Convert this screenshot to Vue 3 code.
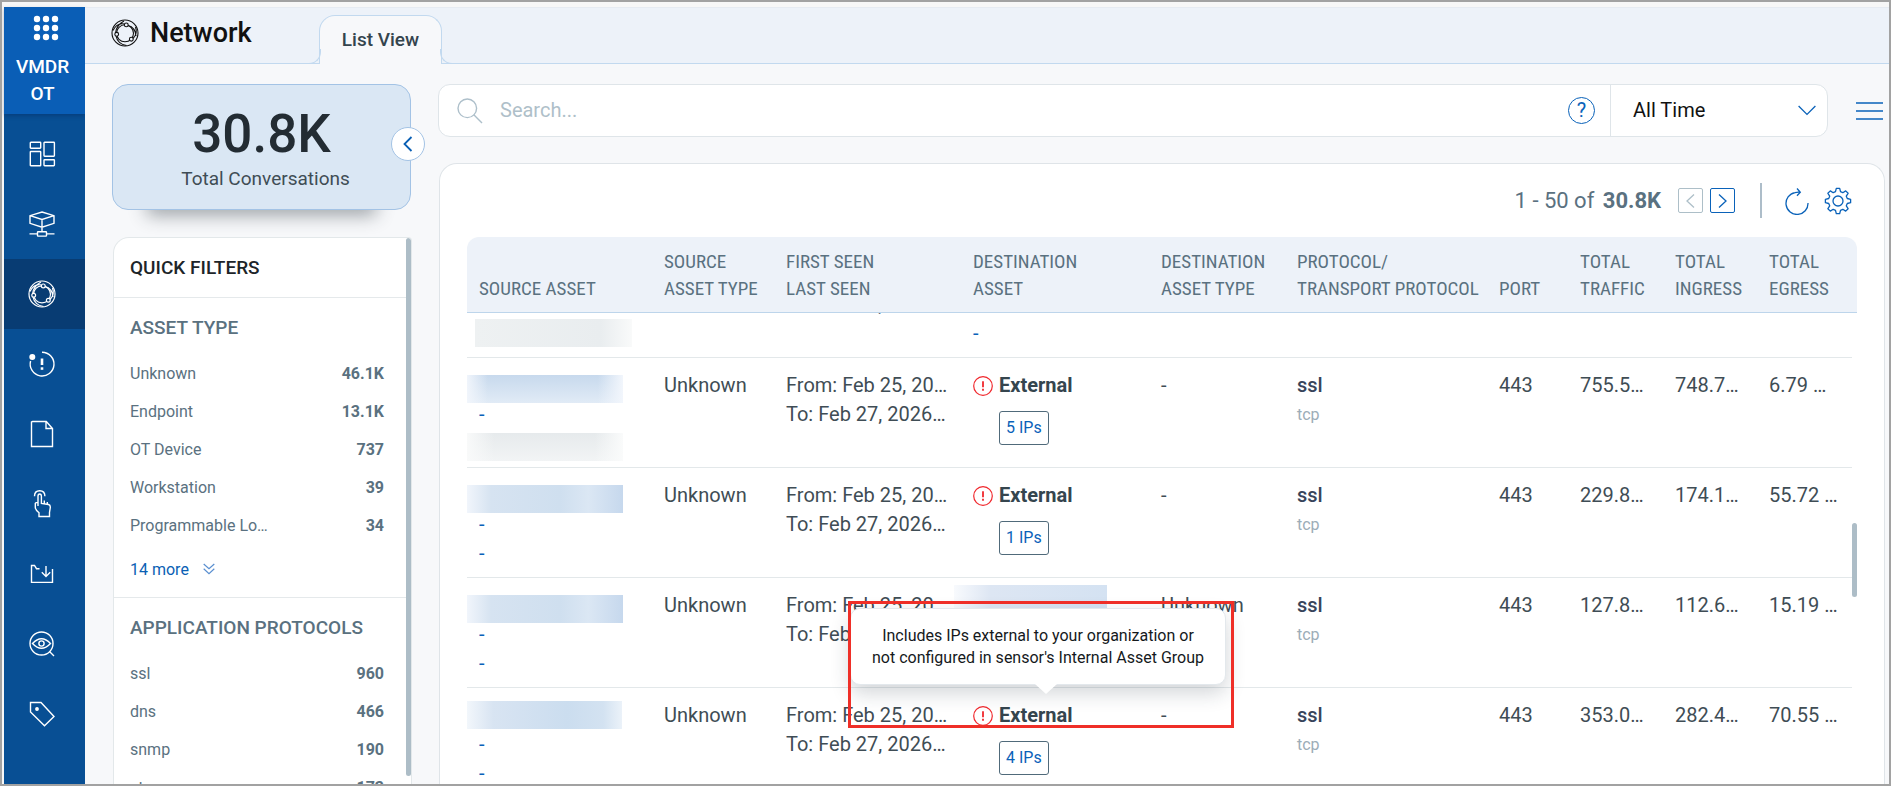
<script setup>
import { ref, onMounted } from 'vue'

const assetTypes = [
  { name: 'Unknown', count: '46.1K' },
  { name: 'Endpoint', count: '13.1K' },
  { name: 'OT Device', count: '737' },
  { name: 'Workstation', count: '39' },
  { name: 'Programmable Lo…', count: '34' },
]
const protocols = [
  { name: 'ssl', count: '960' },
  { name: 'dns', count: '466' },
  { name: 'snmp', count: '190' },
  { name: 'stun', count: '173' },
]
const columns = [
  { key: 'source', lines: ['SOURCE ASSET'] },
  { key: 'stype', lines: ['SOURCE', 'ASSET TYPE'] },
  { key: 'seen', lines: ['FIRST SEEN', 'LAST SEEN'] },
  { key: 'dest', lines: ['DESTINATION', 'ASSET'] },
  { key: 'dtype', lines: ['DESTINATION', 'ASSET TYPE'] },
  { key: 'proto', lines: ['PROTOCOL/', 'TRANSPORT PROTOCOL'] },
  { key: 'port', lines: ['PORT'] },
  { key: 'traffic', lines: ['TOTAL', 'TRAFFIC'] },
  { key: 'ingress', lines: ['TOTAL', 'INGRESS'] },
  { key: 'egress', lines: ['TOTAL', 'EGRESS'] },
]
const rows = [
  { source: ['blue', '-', 'grey'], dtype: '-', ips: '5 IPs', traffic: '755.5…', ingress: '748.7…', egress: '6.79 …' },
  { source: ['fade', '-', '-'], dtype: '-', ips: '1 IPs', traffic: '229.8…', ingress: '174.1…', egress: '55.72 …' },
  { source: ['fade', '-', '-'], dtype: 'Unknown', ips: '', traffic: '127.8…', ingress: '112.6…', egress: '15.19 …' },
  { source: ['soft', '-', '-'], dtype: '-', ips: '4 IPs', traffic: '353.0…', ingress: '282.4…', egress: '70.55 …', tip: true },
]
const nav = ['dashboard', 'assets', 'network', 'alerts', 'reports', 'policy', 'inbox', 'inspect', 'tags']

const period = ref('All Time')
const query = ref('')
const scroller = ref(null)
onMounted(() => {
  scroller.value.scrollTop = 65
})
</script>

<template>
  <div class="frame">
    <nav class="side" aria-label="Main">
      <button class="app" type="button">
        <svg width="26" height="26" viewBox="0 0 26 26" fill="#fff" aria-hidden="true">
          <template v-for="y in 3" :key="y">
            <circle v-for="x in 3" :key="x" :cx="x * 9 - 5" :cy="y * 9 - 5" r="3.2" />
          </template>
        </svg>
        <span>VMDR<br>OT</span>
      </button>
      <div class="items">
        <a v-for="n in nav" :key="n" href="#" :aria-label="n" :class="{ active: n === 'network' }">
          <svg width="28" height="28" viewBox="0 0 28 28" fill="none" stroke="#fff" stroke-width="1.4" aria-hidden="true">
            <template v-if="n === 'dashboard'">
              <rect x="2.3" y="2.2" width="10.4" height="6" rx=".6" /><rect x="2.3" y="11.5" width="10.4" height="14.3" rx=".6" />
              <rect x="16" y="2.2" width="10.4" height="14" rx=".6" /><rect x="16" y="19.7" width="10.4" height="6" rx=".6" />
            </template>
            <template v-else-if="n === 'assets'">
              <path d="M14 2 26 5.7V13.300L14 17.200 2 13.300V5.700Z M2 5.700 14 9.500 26 5.700 M14 9.500V21.500" />
              <rect x="9.500" y="21.700" width="9" height="4.400" rx=".6" /><path d="M1.500 23.900H9.500M18.500 23.900H26.500" />
            </template>
            <g v-else-if="n === 'network'" stroke-width="1.2">
              <circle cx="14" cy="14" r="13" /><circle cx="14" cy="14.300" r="8.500" />
              <path d="M13.500 5C9 4 4.500 6.500 2 11.500M17 6.500C21.500 7.500 24.500 11 25 17M5 17C6 22 10 25.500 15.500 26.500M22 19.500C25 16.500 26 12 24.500 8M4.500 14C5 9 8.500 4.500 13 2" />
              <g fill="#083c73"><circle cx="15.300" cy="5.900" r="1.900" /><circle cx="5.700" cy="15.300" r="1.900" /><circle cx="20.300" cy="20.200" r="1.900" /></g>
            </g>
            <template v-else-if="n === 'alerts'">
              <path d="M14 2.200A11.900 11.900 0 1 1 2.600 11" /><circle cx="4.300" cy="7" r="2.300" fill="#fff" />
              <path d="M14 8.500V15" stroke-width="2.600" /><path d="M14 17.300V19.800" stroke-width="2.600" />
            </template>
            <path v-else-if="n === 'reports'" d="M3.500 1.500V26.500H24.500V8.500L18.300 1.500H4.500Q3.500 1.500 3.500 2.500M18 1.700V8.500H24.400" />
            <template v-else-if="n === 'policy'">
              <path d="M10 16V6.300Q10 4 11.700 4T13.400 6.300V13.500L20.500 14.500Q22.500 15 22.300 17.500L21.500 22.500V26.500H11V22.700Q7.500 20 7.300 17.500V13.300Q8 12.200 10 12.400M13.400 14V9.500M16.300 14.500V10.500M19.300 15V12" />
              <path d="M6.500 6.300Q6.500 .8 11.700 .8T16.900 6.300" />
            </template>
            <path v-else-if="n === 'inbox'" d="M11.500 8.700H8.500L6.500 5.500H3.500V22.400H24.500V9M18 6V16M13.800 12.300 18 16.500 22.200 12.300" />
            <template v-else-if="n === 'inspect'">
              <circle cx="13.500" cy="13.500" r="11.500" /><path d="M21.500 21.500 26 26M4.500 13.500Q13.500 4 22.500 13.500Q13.500 23 4.500 13.500Z" />
              <circle cx="13.500" cy="13.500" r="2.600" />
            </template>
            <template v-else>
              <path d="M2.500 2.500H13L26 16.500 16.500 25.800 2.500 12Z" /><circle cx="9" cy="9" r="1.200" fill="#fff" />
            </template>
          </svg>
        </a>
      </div>
    </nav>

    <div class="page">
      <header class="top">
        <h1>
          <svg width="28" height="28" viewBox="0 0 28 28" fill="none" stroke="#111" stroke-width="1.100" aria-hidden="true">
            <circle cx="14" cy="14" r="13" /><circle cx="14" cy="14.300" r="8.500" />
            <path d="M13.500 5C9 4 4.500 6.500 2 11.500M17 6.500C21.500 7.500 24.500 11 25 17M5 17C6 22 10 25.500 15.500 26.500M22 19.500C25 16.500 26 12 24.500 8M4.500 14C5 9 8.500 4.500 13 2" />
            <g fill="#edf2f9"><circle cx="15.300" cy="5.900" r="1.900" /><circle cx="5.700" cy="15.300" r="1.900" /><circle cx="20.300" cy="20.200" r="1.900" /></g>
          </svg>
          Network
        </h1>
        <a class="tab" href="#">List View</a>
      </header>

      <div class="body">
        <aside>
          <section class="total">
            <strong>30.8K</strong>
            <span>Total Conversations</span>
            <button class="fold" type="button" aria-label="Collapse filters">
              <svg width="10" height="16" viewBox="0 0 10 16" fill="none" stroke="#0a5fb4" stroke-width="1.800"><path d="M8.500 1 1.500 8l7 7" /></svg>
            </button>
          </section>
          <section class="filters">
            <h2>QUICK FILTERS</h2>
            <div class="group">
              <h3>ASSET TYPE</h3>
              <ul>
                <li v-for="f in assetTypes" :key="f.name"><a href="#">{{ f.name }}</a><b>{{ f.count }}</b></li>
              </ul>
              <button class="more" type="button">
                14 more
                <svg width="12" height="12" viewBox="0 0 12 12" fill="none" stroke="#5a8fd0" stroke-width="1.200"><path d="M.7 1 6 5.800 11.300 1M.7 5.800 6 10.600 11.300 5.800" /></svg>
              </button>
            </div>
            <div class="group">
              <h3>APPLICATION PROTOCOLS</h3>
              <ul>
                <li v-for="f in protocols" :key="f.name"><a href="#">{{ f.name }}</a><b>{{ f.count }}</b></li>
              </ul>
            </div>
            <i class="thumb"></i>
          </section>
        </aside>

        <main>
          <div class="bar">
            <div class="search">
              <label for="q" aria-label="Search">
                <svg width="26" height="26" viewBox="0 0 26 26" fill="none" stroke="#adbfca" stroke-width="1.400"><circle cx="10.300" cy="10.300" r="9.300" /><path d="M16.800 16.800 25 25" /></svg>
              </label>
              <input id="q" v-model="query" type="text" placeholder="Search...">
              <button class="help" type="button" aria-label="Help">?</button>
              <div class="period">
                <select v-model="period" aria-label="Time range"><option>All Time</option></select>
                <svg width="18" height="11" viewBox="0 0 18 11" fill="none" stroke="#0a62b9" stroke-width="1.300"><path d="M.6 1 9 9.400 17.400 1" /></svg>
              </div>
            </div>
            <button class="menu" type="button" aria-label="Menu">
              <svg width="27" height="18" viewBox="0 0 27 18" stroke="#0a62b9" stroke-width="1.400"><path d="M0 1H27M0 9H27M0 17H27" /></svg>
            </button>
          </div>

          <section class="card">
            <div class="tools">
              <span class="range">1 - 50 of <b>30.8K</b></span>
              <button class="pg off" type="button" aria-label="Previous page">
                <svg width="9" height="14" viewBox="0 0 9 14" fill="none" stroke="currentColor" stroke-width="1.300"><path d="M8 .6 1 7l7 6.400" /></svg>
              </button>
              <button class="pg" type="button" aria-label="Next page">
                <svg width="9" height="14" viewBox="0 0 9 14" fill="none" stroke="currentColor" stroke-width="1.300"><path d="M1 .6 8 7l-7 6.400" /></svg>
              </button>
              <i class="sep"></i>
              <button class="ico" type="button" aria-label="Refresh">
                <svg width="28" height="28" viewBox="0 0 28 28" fill="none" stroke="#0a62b9" stroke-width="1.300"><path d="M17 5.200Q15 4.800 12 5.600A11 11 0 1 0 25 16M14 1.500 17.300 5.200 14 8.700" /></svg>
              </button>
              <button class="ico" type="button" aria-label="Settings">
                <svg width="28" height="28" viewBox="0 0 28 28" fill="none" stroke="#0a62b9" stroke-width="1.300" stroke-linejoin="round"><circle cx="14" cy="14" r="5" /><path d="M12.300 1h3.400l.8 3.300 2.300 1 2.900-1.800 2.400 2.400-1.800 2.900 1 2.300 3.300.8v3.400l-3.300.8-1 2.300 1.800 2.900-2.400 2.400-2.900-1.800-2.300 1-.8 3.300h-3.400l-.8-3.300-2.300-1-2.900 1.800-2.400-2.400 1.800-2.900-1-2.300L1.400 15.300v-3.400l3.300-.8 1-2.300-1.800-2.900 2.400-2.400 2.900 1.800 2.300-1Z" transform="translate(0 .4)" /></svg>
              </button>
            </div>

            <div class="grid">
              <div ref="scroller" class="scroll">
                <table>
                  <thead>
                    <tr>
                      <th v-for="c in columns" :key="c.key" :class="c.key" scope="col"><span v-for="l in c.lines" :key="l">{{ l }}</span></th>
                    </tr>
                  </thead>
                  <tbody>
                    <tr>
                      <td><span class="ln"></span><span class="ln"></span><i class="blob grey inset"></i></td>
                      <td></td>
                      <td><span class="ln"></span><span class="ln">To: Feb 27, 2026…</span></td>
                      <td><span class="ln"></span><span class="ln"></span><a class="dash" href="#">-</a></td>
                      <td></td><td></td><td></td><td></td><td></td><td></td>
                    </tr>
                    <tr v-for="(r, i) in rows" :key="i">
                      <td>
                        <template v-for="(s, k) in r.source" :key="k">
                          <a v-if="s === '-'" class="dash" href="#">-</a>
                          <i v-else class="blob" :class="s"></i>
                        </template>
                      </td>
                      <td>Unknown</td>
                      <td><span class="ln">From: Feb 25, 20…</span><span class="ln">To: Feb 27, 2026…</span></td>
                      <td :class="{ anchor: r.tip }">
                        <template v-if="r.ips">
                          <span class="ext">
                            <svg width="20" height="20" viewBox="0 0 20 20" fill="none" stroke="#f0282d" stroke-width="1.200" aria-hidden="true"><circle cx="10" cy="10" r="9.300" /><path d="M10 5.200V11.200M10 12.800V14.800" stroke-width="1.800" /></svg>
                            <b>External</b>
                          </span>
                          <button class="ips" type="button">{{ r.ips }}</button>
                        </template>
                        <i v-else class="blob dest-blob"></i>
                        <template v-if="r.tip">
                          <span class="tip" role="tooltip">Includes IPs external to your organization or<br>not configured in sensor's Internal Asset Group</span>
                          <i class="mark"></i>
                        </template>
                      </td>
                      <td>{{ r.dtype }}</td>
                      <td><b class="ln name">ssl</b><span class="ln tcp">tcp</span></td>
                      <td>443</td>
                      <td>{{ r.traffic }}</td>
                      <td>{{ r.ingress }}</td>
                      <td>{{ r.egress }}</td>
                    </tr>
                  </tbody>
                </table>
              </div>
              <div class="track"><i></i></div>
            </div>
          </section>
        </main>
      </div>
    </div>
  </div>
</template>

<style>
body { margin: 0; overflow: hidden; }
</style>

<style scoped>
* { box-sizing: border-box; }
.frame {
  display: flex;
  height: 100vh;
  border: 2px solid #a2a2a2;
  padding: 5px 0 0 2px;
  background: #f7f7f7;
  font-family: Roboto, "Liberation Sans", sans-serif;
  font-size: 20px;
  color: #3f4d55;
  overflow: hidden;
}
button { font: inherit; padding: 0; border: 0; background: none; cursor: pointer; }
a { text-decoration: none; color: inherit; }
svg { display: block; flex: none; }
h1, h2, h3, ul { margin: 0; padding: 0; list-style: none; }
h1, h2, h3 { font-weight: 500; }

.side { flex: none; width: 81px; background: #084f94; }
.app {
  display: flex;
  flex-direction: column;
  align-items: center;
  width: 100%;
  height: 107px;
  padding-top: 8px;
  background: #0a5eb6;
  color: #fff;
  font-size: 19px;
  font-weight: 500;
  line-height: 27px;
  box-shadow: 0 2px 4px rgba(0, 20, 60, .25);
}
.app svg { margin-left: 3px; }
.app span { margin-top: 12px; padding-right: 4px; }
.items { padding-top: 5px; }
.items a { display: flex; align-items: center; justify-content: center; height: 70px; padding-right: 5px; }
.items .active { background: #083c73; }

.page { position: relative; z-index: 0; flex: 1; min-width: 0; display: flex; flex-direction: column; background: #f7f8fa; }
.top {
  flex: none;
  display: flex;
  align-items: flex-start;
  height: 57px;
  padding-left: 26px;
  background: #edf2f9;
  border-bottom: 1px solid #c2d9ef;
  border-top: 1px solid #e6ebf2;
}
.top h1 { display: flex; align-items: center; gap: 11px; width: 208px; height: 49px; font-size: 27px; color: #111; }
.tab {
  position: relative;
  width: 123px;
  height: 49px;
  margin-top: 7px;
  border: 1px solid #c2d9ef;
  border-bottom: 0;
  border-radius: 16px 16px 0 0;
  background: #f7f8fa;
  text-align: center;
  line-height: 48px;
  font-size: 19px;
  font-weight: 500;
  color: #34444d;
}
.tab::before, .tab::after {
  content: "";
  position: absolute;
  bottom: 0;
  width: 14px;
  height: 14px;
  border-bottom: 1px solid #c2d9ef;
}
.tab::before { left: -14px; border-right: 1px solid #c2d9ef; border-bottom-right-radius: 12px; }
.tab::after { right: -14px; border-left: 1px solid #c2d9ef; border-bottom-left-radius: 12px; }

.body { flex: 1; min-height: 0; display: flex; gap: 26px; padding: 20px 4px 0 27px; }
aside { flex: none; width: 300px; display: flex; flex-direction: column; gap: 27px; }
.total {
  position: relative;
  flex: none;
  display: flex;
  flex-direction: column;
  align-items: center;
  height: 126px;
  margin-right: 1px;
  padding-top: 18px;
  border: 1px solid #a3c3e5;
  border-radius: 16px;
  background: #dae7f4;
}
.total::before {
  content: "";
  position: absolute;
  z-index: -1;
  left: 34px;
  right: 34px;
  bottom: 0;
  height: 20px;
  box-shadow: 0 6px 18px rgba(40, 50, 60, .45);
}
.total strong { font-size: 53px; line-height: 62px; font-weight: 500; color: #232c33; }
.total span { padding-left: 8px; font-size: 19px; line-height: 28px; }
.fold {
  position: absolute;
  right: -15px;
  top: 42px;
  display: flex;
  align-items: center;
  justify-content: center;
  width: 34px;
  height: 34px;
  border: 1px solid #a3c3e5;
  border-radius: 50%;
  background: #fff;
}
.filters {
  position: relative;
  flex: 1;
  min-height: 0;
  margin-left: 1px;
  overflow: hidden;
  border: 1px solid #e3e8ea;
  border-bottom: 0;
  border-radius: 16px 4px 0 0;
  background: #fff;
}
.filters h2 { height: 60px; padding-left: 16px; font-size: 19px; line-height: 59px; color: #1d2529; border-bottom: 1px solid #e5e9eb; }
.group { padding: 16px 27px 0 16px; border-bottom: 1px solid #e5e9eb; }
.filters h3 { font-size: 19px; line-height: 28px; color: #5a7180; white-space: nowrap; }
.group ul { padding-top: 13px; }
.group li { display: flex; justify-content: space-between; font-size: 16px; line-height: 38px; color: #5a7180; }
.group b { font-weight: 700; }
.more { display: flex; align-items: center; gap: 14px; height: 52px; padding-bottom: 4px; font-size: 16px; color: #0a5fb4; }
.thumb { position: absolute; right: 0; top: 0; width: 5px; height: calc(100% - 8px); border-radius: 3px; background: #adbdc7; }

main { flex: 1; min-width: 0; display: flex; flex-direction: column; gap: 26px; }
.bar { display: flex; align-items: center; }
.search {
  flex: 1;
  min-width: 0;
  display: flex;
  align-items: center;
  height: 53px;
  border: 1px solid #dfe5e9;
  border-radius: 12px;
  background: #fff;
}
.search label { margin: 0 17px 0 18px; }
.search input { flex: 1; min-width: 0; height: 48px; border: 0; padding: 0 0 2px; outline: 0; background: none; font: inherit; }
.search input::placeholder { color: #afbfc9; opacity: 1; }
.help { width: 27px; height: 27px; margin-right: 15px; border: 1px solid #0a62b9; border-radius: 50%; color: #0a62b9; line-height: 25px; }
.period { position: relative; width: 217px; align-self: stretch; border-left: 1px solid #dfe5e9; }
.period select { width: 100%; height: 100%; padding: 0 0 2px 22px; border: 0; outline: 0; appearance: none; background: none; font: inherit; color: #111; }
.period svg { position: absolute; right: 11px; top: 20px; pointer-events: none; }
.menu { margin: 0 2px 0 28px; }

.card {
  flex: 1;
  min-height: 0;
  display: flex;
  flex-direction: column;
  margin-left: 1px;
  padding: 19px 27px 0;
  border: 1px solid #dfe4e8;
  border-bottom: 0;
  border-radius: 18px 18px 0 0;
  background: #fff;
}
.tools { flex: none; display: flex; align-items: center; justify-content: flex-end; height: 35px; margin-bottom: 19px; padding-right: 5px; }
.range { margin-right: 17px; font-size: 22px; color: #5a7180; }
.range b { margin-left: 3px; font-weight: 700; }
.pg { display: flex; align-items: center; justify-content: center; width: 25px; height: 25px; margin-right: 7px; border: 1px solid #0a62b9; border-radius: 2px; color: #0a62b9; }
.pg.off { border-color: #adbfc8; color: #adbfc8; }
.sep { width: 2px; height: 35px; margin: 0 21px 0 18px; background: #adbdc9; }
.ico { margin-left: 13px; }
.sep + .ico { margin-left: 0; }

.grid { position: relative; flex: 1; min-height: 0; }
.scroll { height: 100%; overflow: hidden; border-radius: 12px 12px 0 0; }
table { width: 100%; table-layout: fixed; border-collapse: separate; border-spacing: 0; }
thead th {
  position: sticky;
  top: 0;
  z-index: 3;
  height: 76px;
  padding: 0 0 10px 12px;
  vertical-align: bottom;
  text-align: left;
  white-space: nowrap;
  font-family: "Roboto Condensed", Roboto, sans-serif;
  font-size: 19px;
  font-weight: 400;
  line-height: 27px;
  color: #5a7180;
  background: #edf2f9;
  border-bottom: 1px solid #bdd5eb;
}
th span, .ln { display: block; }
.source { width: 185px; }
.stype { width: 122px; }
.seen { width: 187px; }
.dest { width: 188px; }
.dtype { width: 136px; }
.proto { width: 202px; }
.port { width: 81px; }
.traffic { width: 95px; }
.ingress { width: 94px; }
.egress { width: 100px; }
td {
  height: 110px;
  padding: 13px 0 0 12px;
  vertical-align: top;
  white-space: nowrap;
  line-height: 29px;
  border-bottom: 1px solid #e3e8ea;
}
.ln { min-height: 29px; }
.name { font-weight: 500; color: #38445a; }
.tcp { font-size: 16px; color: #9cadb7; }
.dash { display: block; color: #0a62b9; }
.blob { display: block; width: 157px; height: 28px; margin: 4px 0 -3px -13px; }
.blue { background: linear-gradient(90deg, #f2f6fc, rgba(242, 246, 252, 0) 14%, rgba(242, 246, 252, 0) 84%, #f2f6fc), linear-gradient(#c7d9ed, #e1ebf6); }
.grey { background: linear-gradient(90deg, #f9fafa, rgba(249, 250, 250, 0) 18%, rgba(249, 250, 250, 0) 82%, #fafbfb), linear-gradient(#e6eaec, #f2f4f5); }
.inset { margin: 0 0 0 -4px; background: linear-gradient(90deg, #eef1f2, #e9edef 80%, #f9fafa); }
.fade { background: linear-gradient(90deg, #f2f6fc, #d6e3f1 16%, #cfdfef 60%, #dbe7f4 78%, #c6d8ed); }
.soft { margin: 0 0 1px -14px; background: linear-gradient(90deg, #f4f8fc, #d8e4f2 18%, #cbddef 65%, #d3e2f1 88%, #ebf2f9); }
.dest-blob { width: 153px; height: 34px; margin: -6px 0 0 -19px; background: linear-gradient(90deg, #f8fafd, #dde6f3 24%, #d4e2f2); }
.ext { display: flex; align-items: center; gap: 6px; height: 29px; }
.ext b { color: #35454e; }
.ips {
  display: block;
  min-width: 49px;
  height: 34px;
  margin: 11px 0 0 26px;
  padding: 0 6px;
  border: 1px solid #506a7a;
  border-radius: 3px;
  font-size: 16px;
  line-height: 30px;
  color: #0a62b9;
}
.anchor { position: relative; z-index: 2; }
.tip {
  position: absolute;
  left: -111px;
  top: -80px;
  width: 376px;
  height: 77px;
  padding: 16px 0;
  border: 1px solid #e3e8ec;
  border-radius: 10px;
  background: #fff;
  box-shadow: 0 8px 20px rgba(30, 45, 60, .2);
  text-align: center;
  font-size: 16px;
  line-height: 22px;
  color: #15191c;
}
.tip::after {
  content: "";
  position: absolute;
  left: 184px;
  bottom: -10px;
  border: solid transparent;
  border-width: 10px 11px 0;
  border-top-color: #fff;
}
.mark { position: absolute; left: -113px; top: -87px; width: 386px; height: 127px; border: 3px solid #ef2f28; }
.track { position: absolute; right: 0; top: 76px; bottom: 0; width: 5px; background: #fff; }
.track i { display: block; height: 74px; margin-top: 210px; border-radius: 3px; background: #adbdc7; }
</style>
